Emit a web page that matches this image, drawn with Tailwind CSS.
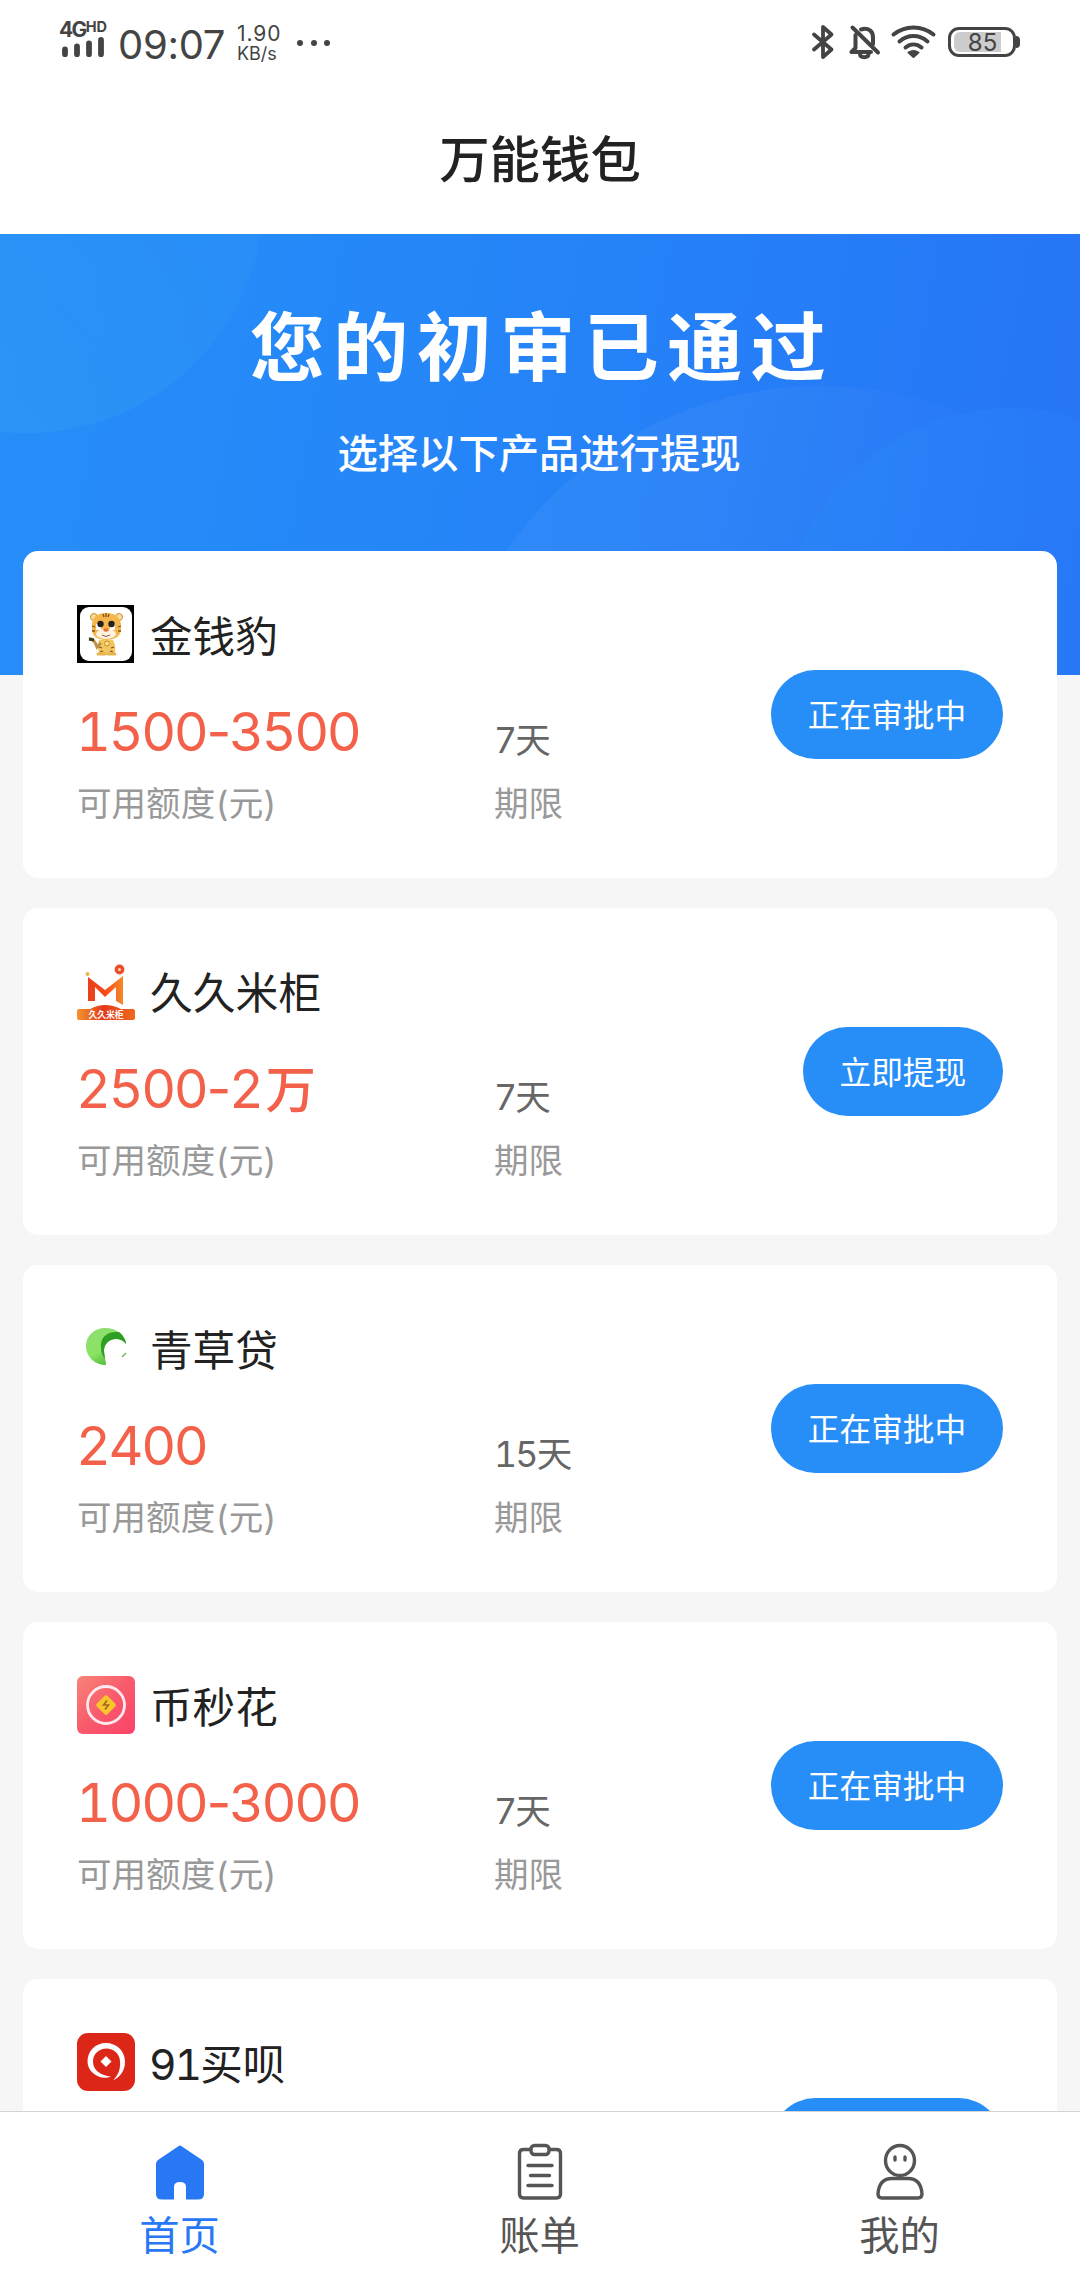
<!DOCTYPE html>
<html lang="zh-CN">
<head>
<meta charset="utf-8">
<title>万能钱包</title>
<script src="https://cdn.jsdelivr.net/npm/@tailwindcss/browser@4"></script>
</head>
<body class="bg-[#f6f6f6]">
<div class="w-[1080px] h-[2280px] flex flex-col overflow-hidden bg-[#f6f6f6] font-['Inter','Noto_Sans_CJK_SC',sans-serif] text-[#222]">

  <!-- Status bar -->
  <header class="h-[84px] shrink-0 bg-white flex items-start text-[#444]">
    <div class="ml-[59px] mt-[21px] w-[49px] flex flex-col">
      <div class="flex items-start font-bold leading-none h-[16px] whitespace-nowrap">
        <span class="text-[21px] leading-[18px] tracking-[-1.6px]">4G</span><span class="text-[14.5px] leading-[11px]">HD</span>
      </div>
      <svg class="ml-[3px]" width="44" height="20" viewBox="0 0 44 20" stroke="#444" stroke-width="5.8" stroke-linecap="round"><path d="M3 12.5V17.3M15 9.5V17.3M27 6.5V17.3M39 3V17.3"/></svg>
    </div>
    <div class="ml-[10px] mt-[25px] w-[108px] text-[40px] leading-[40px] tracking-[-0.3px]">09:07</div>
    <div class="ml-[11px] mt-[23px] w-[48px] flex flex-col">
      <span class="text-[21px] leading-[21px] tracking-[0.9px]">1.90</span>
      <span class="text-[18px] leading-[20px]">KB/s</span>
    </div>
    <div class="ml-[12px] mt-[40px] flex gap-[7.5px]">
      <i class="size-[6px] rounded-full bg-[#444]"></i><i class="size-[6px] rounded-full bg-[#444]"></i><i class="size-[6px] rounded-full bg-[#444]"></i>
    </div>
    <div class="ml-auto mr-[64px] mt-[24px] flex items-start">
      <svg width="24" height="36" viewBox="0 0 24 36" fill="none" stroke="#444" stroke-width="3.8" stroke-linejoin="round" stroke-linecap="round"><path d="M3 10.5L20.5 25.5L12 33V3L20.5 10.5L3 25.5"/></svg>
      <svg class="ml-[14px]" width="32" height="36" viewBox="0 0 32 36" fill="none" stroke="#444" stroke-width="4" stroke-linecap="round" stroke-linejoin="round"><path d="M3.500 3.500L29 28.500"/><path d="M12 5.500C20 3 24 8 24 13V20"/><path d="M6.500 11V24L2.500 28H22"/><path d="M11 30.500C11.500 34 19 34 19.500 30.500"/></svg>
      <svg class="ml-[9px] mr-[1px]" width="48" height="36" viewBox="0 0 48 36" fill="none" stroke="#444" stroke-width="4" stroke-linecap="round"><path d="M3.500 10.500C15 1 32 1 43.500 10.500"/><path d="M9.500 17.500C18 10.300 29 10.300 37.500 17.500"/><path d="M15.500 23.500C20.500 19.500 26.500 19.500 31.500 23.500"/><path d="M18.500 28.500Q23.500 25.500 28.500 28.500L23.500 33Z" fill="#444" stroke-width="2" stroke-linejoin="round"/></svg>
      <div class="ml-[9px] mt-[3px] relative w-[68px] h-[30px] rounded-[11px] border-[3px] border-[#444] p-[2px]">
        <div class="w-[47px] h-full ml-[1px] rounded-l-[6px] bg-[#ccc]"></div>
        <span class="absolute inset-0 pl-[1px] text-center text-[24px] leading-[25px]">85</span>
        <i class="absolute -right-[7px] top-[6px] w-[4px] h-[12px] rounded-r-full bg-[#444]"></i>
      </div>
    </div>
  </header>

  <!-- Title bar -->
  <div class="h-[150px] shrink-0 bg-white text-center font-medium text-[50.4px] leading-[152px]">万能钱包</div>

  <main class="h-[1877px] shrink-0 overflow-hidden relative">
    <!-- Banner -->
    <section class="h-[441px] relative overflow-hidden bg-[linear-gradient(100deg,#268ef8_0%,#2585f8_45%,#2674f6_100%)] text-white text-center">
      <svg class="absolute inset-0" width="1080" height="441" viewBox="0 0 1080 441">
        <defs>
          <linearGradient id="a" x1="0.3" y1="0.9" x2="1" y2="0.2"><stop offset="0" stop-color="#2d98f5" stop-opacity=".65"/><stop offset="1" stop-color="#2d94f8" stop-opacity=".2"/></linearGradient>
          <linearGradient id="b" x1="0" y1="0.1" x2="1" y2="0.35"><stop offset="0" stop-color="#fff" stop-opacity=".045"/><stop offset=".35" stop-color="#fff" stop-opacity=".04"/><stop offset=".75" stop-color="#fff" stop-opacity="0"/></linearGradient>
          <linearGradient id="c" x1="0" y1="0" x2="1" y2="0"><stop offset="0" stop-color="#2a86f8" stop-opacity=".6"/><stop offset=".5" stop-color="#2a80f8" stop-opacity=".5"/><stop offset="1" stop-color="#2a7cf8" stop-opacity=".1"/></linearGradient>
        </defs>
        <circle cx="27" cy="-38" r="237" fill="url(#a)"/>
        <circle cx="820" cy="533" r="381" fill="url(#b)"/>
        <circle cx="1012" cy="404" r="230" fill="url(#c)"/>
      </svg>
      <h1 class="relative pt-[60px] pl-[4px] font-bold text-[75px] leading-[108px] tracking-[8.5px]">您的初审已通过</h1>
      <p class="relative pt-[22px] pr-[2px] font-medium text-[40.3px] leading-[60px]">选择以下产品进行提现</p>
    </section>

    <!-- Product list -->
    <div class="relative -mt-[124px] px-[23px] flex flex-col gap-[30px] tabular-nums">

      <article class="h-[327px] shrink-0 rounded-[15px] bg-white px-[54px] flex items-center justify-between">
        <div class="self-start pt-[54px]">
          <div class="h-[58px] flex items-center gap-[15px]">
            <svg width="58" height="58" viewBox="0 0 58 58"><rect width="57" height="58" fill="#000"/><rect x="3" y="2" width="52" height="54" rx="9" fill="#fff"/>
              <path d="M22 35Q19 42 23 50H37Q40 42 36 35Z" fill="#f3c661"/><path d="M12 34Q17 33 20 42L24 38" fill="none" stroke="#b9944a" stroke-width="3"/><path d="M12 34L17 35" stroke="#3c3c22" stroke-width="3"/>
              <circle cx="17" cy="12" r="3.500" fill="#f7dc9b" stroke="#c98e2f"/><circle cx="42" cy="12" r="3.500" fill="#f7dc9b" stroke="#c98e2f"/>
              <path d="M15 24C14 12 20 8 29 8S45 12 44 24C44 31 38 35 29 35S15 31 15 24Z" fill="#f6b64b"/>
              <ellipse cx="29" cy="29" rx="10" ry="5" fill="#fff3df"/><path d="M19 22H24M33 22H38" stroke="#fff" stroke-width="6"/><circle cx="23.500" cy="19" r="3.200" fill="#222"/><circle cx="34.500" cy="19" r="3.200" fill="#222"/><ellipse cx="29" cy="25" rx="2.800" ry="1.800" fill="#e9713b"/><path d="M25 30Q29 33 33 30" fill="none" stroke="#8a5a44"/>
              <path d="M26 9L27 12M29 8V12M32 9L31 12M15 21L18 22M15 26L18 26M44 21L41 22M44 26L41 26M22 42L25 43M37 42L34 43M23 47L26 46M36 47L33 46" stroke="#7c5420" stroke-width="1.300"/><circle cx="30" cy="38.500" r="2.500" fill="#ffe28a" stroke="#c58a1e"/><path d="M21 49H28M31 49H38" stroke="#e8b44e" stroke-width="3" stroke-linecap="round"/></svg>
            <span class="pt-[5px] text-[42.6px] leading-[54px]">金钱豹</span>
          </div>
          <div class="flex mt-[36px]">
            <div class="w-[417px]">
              <div class="-ml-[1px] h-[66px] text-[54px] leading-[66px] text-[#f3614a] whitespace-nowrap tracking-[-2.4px]">1500<span class="normal-nums">-</span>3500</div>
              <div class="mt-[13px] h-[50px] text-[34.56px] leading-[51px] text-[#999] whitespace-nowrap">可用额度(元)</div>
            </div>
            <div>
              <div class="h-[66px] pt-[9px] text-[35.6px] leading-[66px] tracking-[-1.7px] text-[#666]">7天</div>
              <div class="mt-[13px] h-[50px] text-[34.56px] leading-[51px] text-[#999]">期限</div>
            </div>
          </div>
        </div>
        <button class="h-[89px] px-[36.800px] rounded-full bg-[#278ef8] text-white text-[31.7px] leading-[91px] whitespace-nowrap">正在审批中</button>
      </article>

      <article class="h-[327px] shrink-0 rounded-[15px] bg-white px-[54px] flex items-center justify-between">
        <div class="self-start pt-[54px]">
          <div class="h-[58px] flex items-center gap-[15px]">
            <svg width="58" height="58" viewBox="0 0 58 58"><defs><linearGradient id="m" x1="0" x2="1"><stop offset="0" stop-color="#e8401c"/><stop offset=".5" stop-color="#f9491a"/><stop offset="1" stop-color="#f48a2a"/></linearGradient><linearGradient id="n" x1="0" x2="1"><stop offset="0" stop-color="#f3962f"/><stop offset=".45" stop-color="#e5391b"/><stop offset="1" stop-color="#f06a20"/></linearGradient></defs>
              <path d="M11 15L28 28L46 14V43L39 39V25L28 35L18 25V39H11Z" fill="url(#m)"/><circle cx="10.500" cy="12" r="2" fill="#f3b04a"/><circle cx="42.500" cy="7.500" r="3.200" fill="#fbd9b8" stroke="#e9502a" stroke-width="3.400"/>
              <path d="M2 47H13Q28 39 44 47H56Q58 47 58 49V56Q58 58 56 58H2Q0 58 0 56V49Q0 47 2 47Z" fill="url(#n)"/><text x="29" y="55.500" text-anchor="middle" font-size="8.800" font-weight="700" fill="#fff" font-family="Noto Sans CJK SC">久久米柜</text></svg>
            <span class="pt-[5px] text-[42.8px] leading-[54px]">久久米柜</span>
          </div>
          <div class="flex mt-[36px]">
            <div class="w-[417px]">
              <div class="-ml-[1px] h-[66px] text-[54px] leading-[66px] text-[#f3614a] whitespace-nowrap tracking-[-2.4px]">2500<span class="normal-nums">-</span>2<span class="ml-[4px] text-[50.4px] font-medium">万</span></div>
              <div class="mt-[13px] h-[50px] text-[34.56px] leading-[51px] text-[#999] whitespace-nowrap">可用额度(元)</div>
            </div>
            <div>
              <div class="h-[66px] pt-[9px] text-[35.6px] leading-[66px] tracking-[-1.7px] text-[#666]">7天</div>
              <div class="mt-[13px] h-[50px] text-[34.56px] leading-[51px] text-[#999]">期限</div>
            </div>
          </div>
        </div>
        <button class="h-[89px] px-[36.800px] rounded-full bg-[#278ef8] text-white text-[31.7px] leading-[91px] whitespace-nowrap">立即提现</button>
      </article>

      <article class="h-[327px] shrink-0 rounded-[15px] bg-white px-[54px] flex items-center justify-between">
        <div class="self-start pt-[54px]">
          <div class="h-[58px] flex items-center gap-[15px]">
            <svg width="58" height="58" viewBox="0 0 58 58"><defs><linearGradient id="g" x1="0" y1="0" x2=".6" y2="1"><stop offset="0" stop-color="#8fdc72"/><stop offset=".6" stop-color="#8be463"/><stop offset="1" stop-color="#4cb636"/></linearGradient></defs>
              <path d="M29 46C18 46 9 38 9 27C9 16 18 9 28 9C40 9 48 16 49 25C46 21 42 20 39 20C32 20 27 25 27 32C27 37 29 41 29 46Z" fill="url(#g)"/><path d="M24 29C23 18 30 12 42 13C46 16 49 21 49 25C46 21 42 20 39 20C32 20 27 25 27 32L28 40Q24 35 24 29Z" fill="#2f9e24"/><path d="M45 38L49 34" stroke="#68b859" stroke-width="1.500"/></svg>
            <span class="pt-[5px] text-[42.6px] leading-[54px]">青草贷</span>
          </div>
          <div class="flex mt-[36px]">
            <div class="w-[417px]">
              <div class="-ml-[1px] h-[66px] text-[54px] leading-[66px] text-[#f3614a] whitespace-nowrap tracking-[-2.4px]">2400</div>
              <div class="mt-[13px] h-[50px] text-[34.56px] leading-[51px] text-[#999] whitespace-nowrap">可用额度(元)</div>
            </div>
            <div>
              <div class="h-[66px] pt-[9px] text-[35.6px] leading-[66px] tracking-[-1.7px] text-[#666]">15天</div>
              <div class="mt-[13px] h-[50px] text-[34.56px] leading-[51px] text-[#999]">期限</div>
            </div>
          </div>
        </div>
        <button class="h-[89px] px-[36.800px] rounded-full bg-[#278ef8] text-white text-[31.7px] leading-[91px] whitespace-nowrap">正在审批中</button>
      </article>

      <article class="h-[327px] shrink-0 rounded-[15px] bg-white px-[54px] flex items-center justify-between">
        <div class="self-start pt-[54px]">
          <div class="h-[58px] flex items-center gap-[15px]">
            <svg width="58" height="58" viewBox="0 0 58 58"><defs><linearGradient id="p" x1="0" y1="0" x2="1" y2="1"><stop offset="0" stop-color="#f78577"/><stop offset=".5" stop-color="#f95a6c"/><stop offset="1" stop-color="#fa4268"/></linearGradient></defs><rect width="58" height="58" rx="6" fill="url(#p)"/><circle cx="29" cy="29" r="18.500" fill="none" stroke="#ffe9ee" stroke-width="2.800"/><rect x="21.500" y="21.500" width="15" height="15" rx="2" transform="rotate(45 29 29)" fill="#f7c52c"/><path d="M30 24.500L26.500 29H31.500L28 33.500" fill="none" stroke="#a8661c" stroke-width="1.600"/></svg>
            <span class="pt-[5px] text-[42.6px] leading-[54px]">币秒花</span>
          </div>
          <div class="flex mt-[36px]">
            <div class="w-[417px]">
              <div class="-ml-[1px] h-[66px] text-[54px] leading-[66px] text-[#f3614a] whitespace-nowrap tracking-[-2.4px]">1000<span class="normal-nums">-</span>3000</div>
              <div class="mt-[13px] h-[50px] text-[34.56px] leading-[51px] text-[#999] whitespace-nowrap">可用额度(元)</div>
            </div>
            <div>
              <div class="h-[66px] pt-[9px] text-[35.6px] leading-[66px] tracking-[-1.7px] text-[#666]">7天</div>
              <div class="mt-[13px] h-[50px] text-[34.56px] leading-[51px] text-[#999]">期限</div>
            </div>
          </div>
        </div>
        <button class="h-[89px] px-[36.800px] rounded-full bg-[#278ef8] text-white text-[31.7px] leading-[91px] whitespace-nowrap">正在审批中</button>
      </article>

      <article class="h-[327px] shrink-0 rounded-[15px] bg-white px-[54px] flex items-center justify-between">
        <div class="self-start pt-[54px]">
          <div class="h-[58px] flex items-center gap-[15px]">
            <svg width="58" height="58" viewBox="0 0 58 58"><rect width="58" height="58" rx="11" fill="#dc2718"/><path d="M34 43.500C24 48 10.500 40 10.500 28.500C10.500 18 18.500 10 29 10C39.500 10 48 18 48 28.500C48 38 43 44 36 47.500C41.500 41.500 43.500 37 43 28C42.500 20.500 36.500 15.500 29.500 15.500C22 15.500 16 21 16 28.500C16 37.500 24 42.500 34 43.500Z" fill="#fff"/><path d="M29 23L34.500 28.500L29 34L23.500 28.500Z" fill="#fff"/></svg>
            <span class="pt-[5px] text-[42.6px] leading-[54px] -ml-[1px]"><span class="tracking-[-2px]">91</span>买呗</span>
          </div>
        </div>
        <button aria-label="正在审批中" class="h-[89px] w-[232px] rounded-full bg-[#278ef8]"></button>
      </article>
    </div>
  </main>

  <!-- Tab bar -->
  <nav class="h-[169px] shrink-0 bg-white border-t border-[#d4d4d4] grid grid-cols-3 text-[40.3px] leading-[56px] text-[#555]">
    <a class="flex flex-col items-center pt-[31px] text-[#2878f6]">
      <svg width="60" height="60" viewBox="0 0 60 60"><path d="M28 3.500Q30 1.500 32 3.500L52 17Q54 18.500 54 21V51Q54 56.500 48 56.500H36V44Q36 39 30 39T24 44V56.500H12Q6 56.500 6 51V21Q6 18.500 8 17Z" fill="#2878f6"/></svg>
      <span class="mt-[5px] pr-[1px]">首页</span>
    </a>
    <a class="flex flex-col items-center pt-[31px]">
      <svg width="60" height="60" viewBox="0 0 60 60" fill="none" stroke="#555" stroke-width="3.400"><path d="M20 6.500H13.500Q9.500 6.500 9.500 10.500V51Q9.500 55 13.500 55H46.500Q50.500 55 50.500 51V10.500Q50.500 6.500 46.500 6.500H40"/><rect x="21" y="2.500" width="18" height="9" rx="3.500"/><path d="M18 22.500H42M20.500 32.500H39.500M18 42.500H42" stroke-linecap="round"/></svg>
      <span class="mt-[5px] pr-[1px]">账单</span>
    </a>
    <a class="flex flex-col items-center pt-[31px]">
      <svg width="60" height="60" viewBox="0 0 60 60" fill="none" stroke="#555" stroke-width="3.400"><ellipse cx="30" cy="17.500" rx="14.500" ry="15"/><path d="M25 14V17M35 14V17" stroke-linecap="round"/><path d="M22 35.500H38C48 35.500 51.500 43 52 51Q52 55 48 55H12Q8 55 8 51C8.500 43 12 35.500 22 35.500Z"/></svg>
      <span class="mt-[5px] pr-[1px]">我的</span>
    </a>
  </nav>
</div>
</body>
</html>
